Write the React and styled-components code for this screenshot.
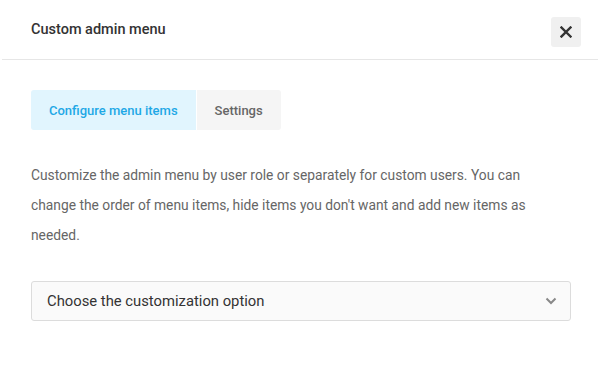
import React from 'react'
import styled, { createGlobalStyle } from 'styled-components'

const Global = createGlobalStyle`
  body {
    margin: 0;
    background: #fff;
    font-family: Roboto, "Liberation Sans", sans-serif;
  }
`

const Modal = styled.div`
  width: 600px;
  background: #fff;
`

const Header = styled.div`
  display: flex;
  align-items: center;
  justify-content: space-between;
  height: 60px;
  margin: 0 2px;
  padding: 4px 17px 0 29px;
  box-sizing: border-box;
  border-bottom: 1px solid #e6e6e6;
`

const Title = styled.h3`
  margin: 0 0 5px;
  font-size: 14.5px;
  font-weight: 500;
  color: #333;
`

const CloseButton = styled.button`
  width: 30px;
  height: 30px;
  border: 0;
  border-radius: 3px;
  background: #f0f0f0;
  display: flex;
  align-items: center;
  justify-content: center;
  padding: 0;
  cursor: pointer;
`

const Body = styled.div`
  padding: 30px 29px 40px 31px;
`

const Tabs = styled.div`
  display: flex;
  gap: 1px;
`

const Tab = styled.button`
  height: 40px;
  border: 0;
  padding: 0 18px;
  font-family: inherit;
  font-size: 13px;
  font-weight: 500;
  color: ${p => (p.$active ? '#1ea8e6' : '#666')};
  background: ${p => (p.$active ? '#e1f5fe' : '#f5f5f5')};
  border-radius: ${p => (p.$first ? '3px 0 0 3px' : '0 3px 3px 0')};
  cursor: pointer;
`

const Text = styled.p`
  max-width: 520px;
  margin: 30px 0 31px;
  font-size: 13.8px;
  line-height: 30px;
  color: #666;
`

const Select = styled.div`
  height: 38px;
  border: 1px solid #dcdcdc;
  border-radius: 3px;
  background: #fafafa;
  display: flex;
  align-items: center;
  justify-content: space-between;
  padding: 0 13px 0 15px;
  font-size: 14.8px;
  color: #333;
`

export default function App() {
  return (
    <Modal>
      <Global />
      <Header>
        <Title>Custom admin menu</Title>
        <CloseButton aria-label="Close">
          <svg width="12" height="12" viewBox="0 0 12 12">
            <path d="M1.5 1.5 L10.5 10.5 M10.5 1.5 L1.5 10.5" stroke="#333" strokeWidth="2.4" strokeLinecap="square" />
          </svg>
        </CloseButton>
      </Header>
      <Body>
        <Tabs>
          <Tab $active $first>Configure menu items</Tab>
          <Tab>Settings</Tab>
        </Tabs>
        <Text>
          Customize the admin menu by user role or separately for custom users. You can change the order of menu items, hide items you don't want and add new items as needed.
        </Text>
        <Select>
          <span>Choose the customization option</span>
          <svg width="12" height="8" viewBox="0 0 12 8">
            <path d="M1.5 1.5 L6 6 L10.5 1.5" fill="none" stroke="#888" strokeWidth="2" />
          </svg>
        </Select>
      </Body>
    </Modal>
  )
}
